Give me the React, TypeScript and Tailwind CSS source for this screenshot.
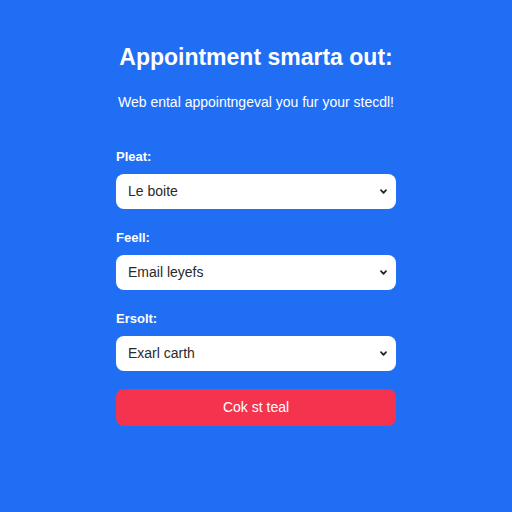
import React from "react";

function Chevron() {
  return (
    <svg width="7" height="5" viewBox="0 0 7 5" className="shrink-0">
      <path d="M1 1.2 L3.5 3.8 L6 1.2" fill="none" stroke="#222" strokeWidth="1.7" strokeLinecap="round" strokeLinejoin="round" />
    </svg>
  );
}

function Field({ label, value, first }: { label: string; value: string; first?: boolean }) {
  return (
    <div className={first ? "flex flex-col" : "mt-[21px] flex flex-col"}>
      <div className="text-[13px] font-bold leading-4 text-white">{label}</div>
      <div className="mt-[9px] flex h-[35px] items-center justify-between rounded-[8px] bg-white pl-[12px] pr-[9px]">
        <span className="text-[14px] text-[#2a2a2a]">{value}</span>
        <Chevron />
      </div>
    </div>
  );
}

export default function App() {
  return (
    <div
      className="flex h-[512px] w-[512px] flex-col items-center bg-[#1f6ef4]"
      style={{ fontFamily: '"Liberation Sans", Arial, sans-serif' }}
    >
      <h1 className="mt-[43px] text-[23px] font-bold leading-[28px] text-white">Appointment smarta out:</h1>
      <p className="mt-[22px] text-[14px] leading-[18px] text-white">Web ental appointngeval you fur your stecdl!</p>
      <div className="mt-[38px] flex w-[280px] flex-col">
        <Field first label="Pleat:" value="Le boite" />
        <Field label="Feell:" value="Email leyefs" />
        <Field label="Ersolt:" value="Exarl carth" />
        <button className="mt-[18px] flex h-[37px] items-center justify-center rounded-[8px] bg-[#f4344f] text-[14px] text-white">
          Cok st teal
        </button>
      </div>
    </div>
  );
}
